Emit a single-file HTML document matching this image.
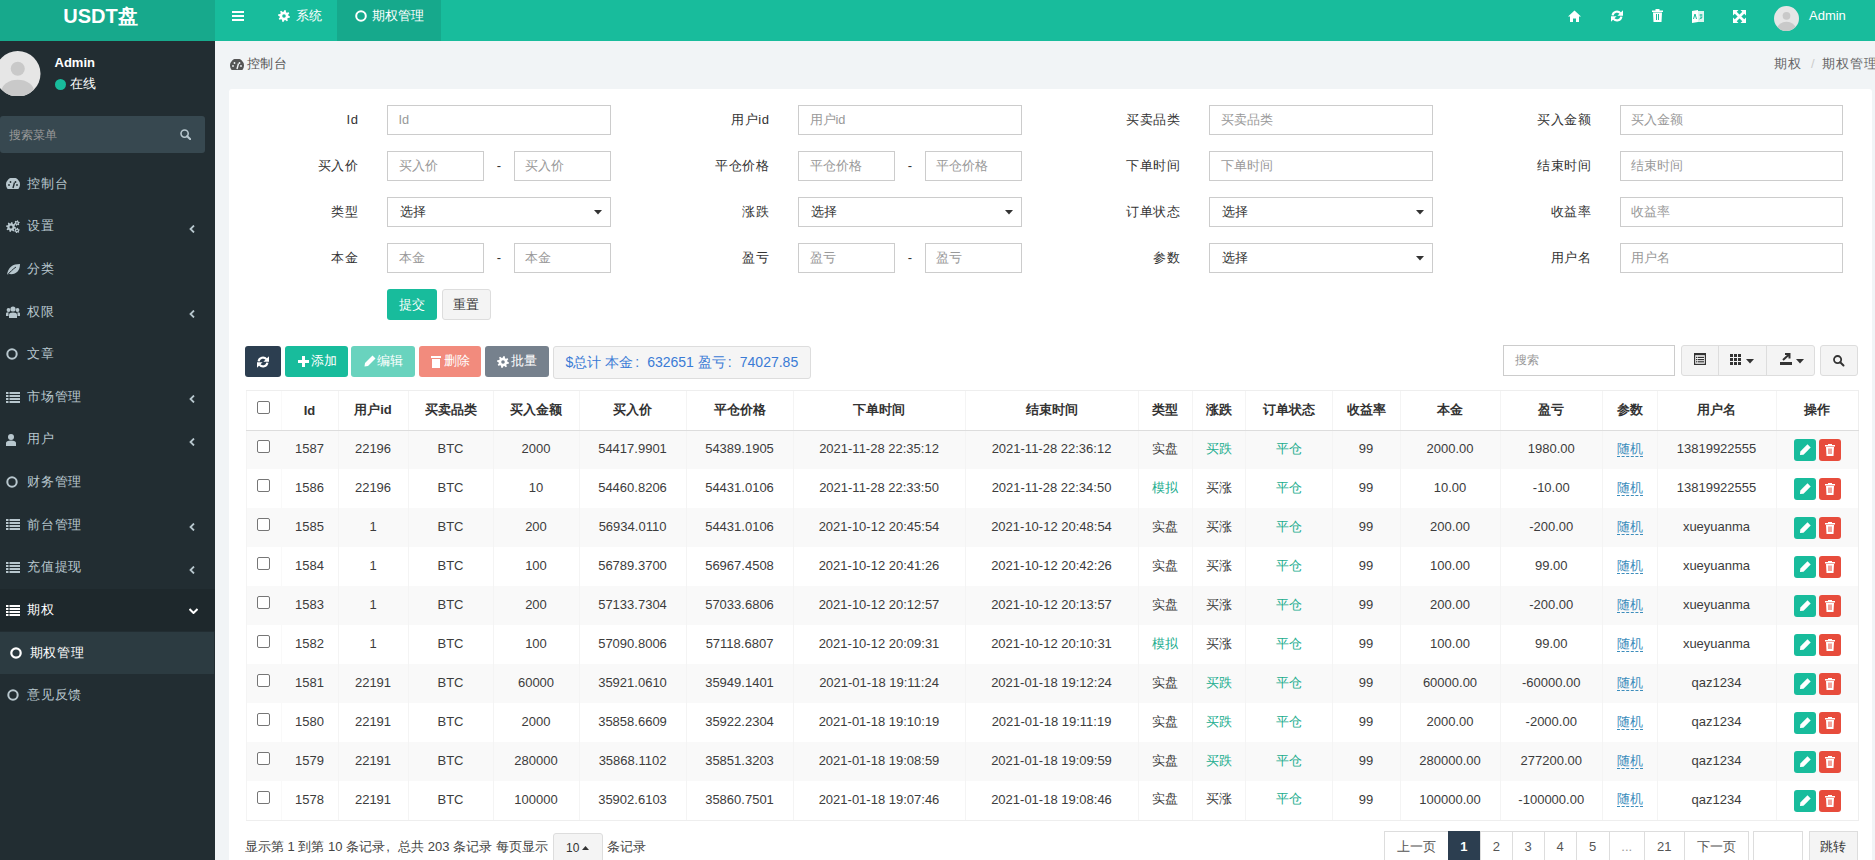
<!DOCTYPE html><html><head><meta charset="utf-8"><title>期权管理</title><style>
*{box-sizing:border-box;margin:0;padding:0}
html,body{width:1875px;height:860px;overflow:hidden}
body{font-family:"Liberation Sans",sans-serif;background:#f1f4f6;position:relative;color:#333;font-size:13px}
.abs{position:absolute}
svg{display:block}
.hdr{position:absolute;left:0;top:0;width:1875px;height:40.5px;background:#18bc9c}
.logo{position:absolute;left:0;top:0;width:215px;height:40.5px;background:#17a98c;color:#fff;font-weight:bold;font-size:20px;line-height:40px;text-align:center}
.navtxt{position:absolute;color:#fff;font-size:13px;line-height:16px;white-space:nowrap}
.side{position:absolute;left:0;top:40.5px;width:215px;height:820px;background:#222d32}
.mi{position:absolute;left:0;width:215px;height:42.6px;color:#b8c7ce;font-size:13px;letter-spacing:0.8px}
.mi .t{position:absolute;left:27px;top:0;line-height:42.6px;white-space:nowrap}
.mi .ic{position:absolute;left:6px;top:15px}
.mi .ch{position:absolute;left:189px;top:17px}
.panel{position:absolute;left:229px;top:89px;width:1643px;height:800px;background:#fff;border-radius:3px}
.lbl{position:absolute;width:121.6px;text-align:right;font-size:13px;letter-spacing:0.6px;color:#333;line-height:30px;white-space:nowrap}
.inp{position:absolute;height:30px;border:1px solid #ccc;background:#fff;font-size:12.8px;color:#999;line-height:28px;padding-left:10.5px;white-space:nowrap}
.sel{color:#333;font-size:13px;padding-left:12px}
.dash{position:absolute;width:10px;text-align:center;line-height:30px;color:#333;font-size:13px}
.btn{position:absolute;height:31px;border-radius:3px;color:#fff;font-size:12px;font-weight:500;line-height:31px;text-align:center;white-space:nowrap}
table{border-collapse:collapse;table-layout:fixed;position:absolute}
td,th{text-align:center;white-space:nowrap;overflow:hidden;border-left:1px solid #f4f4f4;font-size:13px;color:#333}
td{color:#3c3c3c}
th{font-weight:bold;height:40px;border-bottom:1px solid #ddd;border-top:1px solid #eee}
th:last-child,td:last-child{border-right:1px solid #eee}
tr:last-child td{border-bottom:1px solid #eee}
td{height:39px;padding-bottom:2px}
tr.odd td{background:#f9f9f9}
td:nth-child(2),th:nth-child(2){border-left-color:#f9f9f9}
.g{color:#22ad8e}
.rand{color:#3c8dbc;border-bottom:1px dashed #3c8dbc}
.cb{display:inline-block;width:13px;height:13px;border:1px solid #767676;border-radius:2px;background:#fff;vertical-align:middle;position:relative;top:-3px}
th .cb{top:-4px}
.pg{position:absolute;top:831px;height:32px;border:1px solid #ddd;background:#fff;color:#555;font-size:13px;line-height:30px;text-align:center}
</style></head><body>
<div class="hdr"></div>
<div class="logo"><span style="position:relative;left:-7px;top:-4px">USDT盘</span></div>
<svg class="abs" style="left:232px;top:10.5px;" width="13" height="10" viewBox="0 0 13 10"><rect x="0" y="0" width="12" height="2" fill="#fff"/><rect x="0" y="4" width="12" height="2" fill="#fff"/><rect x="0" y="8" width="12" height="2" fill="#fff"/></svg>
<svg class="abs" style="left:278px;top:9.5px;" width="12" height="12" viewBox="0 0 12 12"><path d="M6.59,0.03 L7.74,0.26 L8.03,2.21 L8.73,2.68 L10.64,2.19 L11.29,3.17 L10.11,4.75 L10.28,5.58 L11.97,6.59 L11.74,7.74 L9.79,8.03 L9.32,8.73 L9.81,10.64 L8.83,11.29 L7.25,10.11 L6.42,10.28 L5.41,11.97 L4.26,11.74 L3.97,9.79 L3.27,9.32 L1.36,9.81 L0.71,8.83 L1.89,7.25 L1.72,6.42 L0.03,5.41 L0.26,4.26 L2.21,3.97 L2.68,3.27 L2.19,1.36 L3.17,0.71 L4.75,1.89 L5.58,1.72Z" fill="#fff"/><circle cx="6" cy="6" r="1.8" fill="#18bc9c"/></svg>
<div class="navtxt" style="left:295.5px;top:7.5px">系统</div>
<div class="abs" style="left:337px;top:0;width:104px;height:40.5px;background:#16a98c"></div>
<svg class="abs" style="left:355px;top:9.5px;" width="12" height="12" viewBox="0 0 12 12"><circle cx="6" cy="6" r="4.8" fill="none" stroke="#fff" stroke-width="2"/></svg>
<div class="navtxt" style="left:372px;top:7.5px">期权管理</div>
<svg class="abs" style="left:1568px;top:10px;" width="13" height="12" viewBox="0 0 13 12"><path d="M6.5,0.5 L13,6.5 L11,6.5 L11,12 L8,12 L8,8.5 L5,8.5 L5,12 L2,12 L2,6.5 L0,6.5 Z" fill="#fff"/></svg>
<svg class="abs" style="left:1610.5px;top:10px;" width="12" height="12" viewBox="0 0 12 12"><path d="M1.6,5.4 A4.4,4.4 0 0 1 9.4,3.3" stroke="#fff" stroke-width="2.2" fill="none"/><path d="M12,0.2 L12,5.8 L6.4,5.8 Z" fill="#fff"/><path d="M10.4,6.6 A4.4,4.4 0 0 1 2.6,8.7" stroke="#fff" stroke-width="2.2" fill="none"/><path d="M0,11.8 L0,6.2 L5.6,6.2 Z" fill="#fff"/></svg>
<svg class="abs" style="left:1651.5px;top:9px;" width="11" height="13" viewBox="0 0 11 13"><path d="M3.5,1.5 L3.5,0 L7.5,0 L7.5,1.5 L11,1.5 L11,3 L0,3 L0,1.5 Z M1,3.5 L10,3.5 L9.5,13 L1.5,13 Z" fill="#fff"/><rect x="4" y="5" width="1" height="6" fill="#18bc9c"/><rect x="6" y="5" width="1" height="6" fill="#18bc9c"/></svg>
<svg class="abs" style="left:1692px;top:9.5px;" width="12" height="13" viewBox="0 0 12 13"><path d="M0,1 L6,0 L6,12 L0,13 Z" fill="#fff"/><path d="M6,1 L12,1 L12,12 L6,12 Z" fill="#fff" opacity="0.85"/><path d="M1.5,9 L3,4 L4.5,9" stroke="#18bc9c" stroke-width="1" fill="none"/><path d="M7.5,5 L10.5,5 M9,4 L9,9 M7.5,9 L10.5,7" stroke="#18bc9c" stroke-width="0.9" fill="none"/></svg>
<svg class="abs" style="left:1732.5px;top:9.5px;" width="13" height="13" viewBox="0 0 13 13"><path d="M2.5,2.5 L10.5,10.5 M10.5,2.5 L2.5,10.5" stroke="#fff" stroke-width="2.6"/><path d="M0,0 L5.5,0 L0,5.5 Z M13,0 L13,5.5 L7.5,0 Z M0,13 L0,7.5 L5.5,13 Z M13,13 L7.5,13 L13,7.5 Z" fill="#fff"/></svg>
<svg class="abs" style="left:1774px;top:6px;" width="25" height="25" viewBox="0 0 25 25"><defs><clipPath id="c1774"><circle cx="12.5" cy="12.5" r="12.5"/></clipPath></defs><circle cx="12.5" cy="12.5" r="12.5" fill="#e6e6e6"/><g clip-path="url(#c1774)"><circle cx="12.5" cy="9.75" r="3.875" fill="#c9c9c9"/><ellipse cx="12.5" cy="22.25" rx="9.0" ry="6.5" fill="#c9c9c9"/></g></svg>
<div class="navtxt" style="left:1809px;top:8px">Admin</div>
<div class="side"></div>
<svg class="abs" style="left:-5px;top:50.5px;" width="45.5" height="45.5" viewBox="0 0 45.5 45.5"><defs><clipPath id="c-5"><circle cx="22.75" cy="22.75" r="22.75"/></clipPath></defs><circle cx="22.75" cy="22.75" r="22.75" fill="#e6e6e6"/><g clip-path="url(#c-5)"><circle cx="22.75" cy="17.745" r="7.0525" fill="#c9c9c9"/><ellipse cx="22.75" cy="40.495" rx="16.38" ry="11.83" fill="#c9c9c9"/></g></svg>
<div class="abs" style="left:54.5px;top:54.5px;color:#fff;font-weight:bold;font-size:13px;line-height:16px">Admin</div>
<div class="abs" style="left:55px;top:79px;width:11px;height:11px;border-radius:50%;background:#18bc9c"></div>
<div class="abs" style="left:70px;top:75.5px;color:#fff;font-size:13px;line-height:16px">在线</div>
<div class="abs" style="left:0;top:116px;width:205px;height:37px;background:#374850;border-radius:3px"></div>
<div class="abs" style="left:9px;top:126.5px;color:#999;font-size:12px;line-height:16px">搜索菜单</div>
<svg class="abs" style="left:180px;top:129px;" width="11" height="11" viewBox="0 0 11 11"><circle cx="4.6" cy="4.6" r="3.6" fill="none" stroke="#b8c7ce" stroke-width="1.6"/><path d="M7.2,7.2 L10.5,10.5" stroke="#b8c7ce" stroke-width="2" stroke-linecap="round"/></svg>
<div class="mi" style="top:162.70px;color:#b8c7ce">
<svg class="ic" style="top:15.8px;" width="14" height="11" viewBox="0 0 14 11"><path d="M1.6,11 A7,7 0 1 1 12.4,11 Z" fill="#b8c7ce"/><path d="M7,10 L8.5,4.5" stroke="#222d32" stroke-width="1.4"/><circle cx="3" cy="7" r="0.9" fill="#222d32"/><circle cx="4.5" cy="4" r="0.9" fill="#222d32"/><circle cx="9.5" cy="4" r="0.9" fill="#222d32"/><circle cx="11" cy="7" r="0.9" fill="#222d32"/></svg>
<span class="t">控制台</span>
</div>
<div class="mi" style="top:205.32px;color:#b8c7ce">
<svg class="ic" style="top:14.8px;" width="14" height="13" viewBox="0 0 14 13"><path d="M5.49,2.02 L6.45,2.22 L6.70,3.83 L7.28,4.22 L8.87,3.83 L9.41,4.64 L8.44,5.95 L8.58,6.65 L9.98,7.49 L9.78,8.45 L8.17,8.70 L7.78,9.28 L8.17,10.87 L7.36,11.41 L6.05,10.44 L5.35,10.58 L4.51,11.98 L3.55,11.78 L3.30,10.17 L2.72,9.78 L1.13,10.17 L0.59,9.36 L1.56,8.05 L1.42,7.35 L0.02,6.51 L0.22,5.55 L1.83,5.30 L2.22,4.72 L1.83,3.13 L2.64,2.59 L3.95,3.56 L4.65,3.42Z" fill="#b8c7ce"/><circle cx="5" cy="7" r="1.5" fill="#222d32"/><path d="M11.37,0.22 L12.07,0.41 L12.22,1.41 L12.59,1.78 L13.59,1.93 L13.78,2.63 L12.98,3.26 L12.85,3.77 L13.22,4.70 L12.70,5.22 L11.77,4.85 L11.26,4.98 L10.63,5.78 L9.93,5.59 L9.78,4.59 L9.41,4.22 L8.41,4.07 L8.22,3.37 L9.02,2.74 L9.15,2.23 L8.78,1.30 L9.30,0.78 L10.23,1.15 L10.74,1.02Z" fill="#b8c7ce"/><circle cx="11" cy="3" r="0.8" fill="#222d32"/><path d="M11.37,7.72 L12.07,7.91 L12.22,8.91 L12.59,9.28 L13.59,9.43 L13.78,10.13 L12.98,10.76 L12.85,11.27 L13.22,12.20 L12.70,12.72 L11.77,12.35 L11.26,12.48 L10.63,13.28 L9.93,13.09 L9.78,12.09 L9.41,11.72 L8.41,11.57 L8.22,10.87 L9.02,10.24 L9.15,9.73 L8.78,8.80 L9.30,8.28 L10.23,8.65 L10.74,8.52Z" fill="#b8c7ce"/><circle cx="11" cy="10.5" r="0.8" fill="#222d32"/></svg>
<span class="t">设置</span>
<svg class="ch" style="top:19.5px;" width="6" height="8" viewBox="0 0 6 8"><path d="M5,0.5 L1.5,4 L5,7.5" stroke="#b8c7ce" stroke-width="1.8" fill="none"/></svg>
</div>
<div class="mi" style="top:247.94px;color:#b8c7ce">
<svg class="ic" style="top:14.8px;" width="14" height="13" viewBox="0 0 14 13"><path d="M1,12 C2,4 7,1 14,1 C14,8 10,12 3,11 Z" fill="#b8c7ce"/><path d="M1,12.5 C4,9 7,6 10,4" stroke="#222d32" stroke-width="1" fill="none"/></svg>
<span class="t">分类</span>
</div>
<div class="mi" style="top:290.56px;color:#b8c7ce">
<svg class="ic" style="top:15.3px;" width="14" height="12" viewBox="0 0 14 12"><circle cx="7" cy="3" r="2.6" fill="#b8c7ce"/><circle cx="2.5" cy="4" r="1.9" fill="#b8c7ce"/><circle cx="11.5" cy="4" r="1.9" fill="#b8c7ce"/><path d="M3,12 L3,8.5 Q3,6.5 7,6.5 Q11,6.5 11,8.5 L11,12 Z" fill="#b8c7ce"/><path d="M0,10 L0,7.5 Q0,6.2 2.5,6.2 L2.5,10 Z M14,10 L14,7.5 Q14,6.2 11.5,6.2 L11.5,10 Z" fill="#b8c7ce"/></svg>
<span class="t">权限</span>
<svg class="ch" style="top:19.5px;" width="6" height="8" viewBox="0 0 6 8"><path d="M5,0.5 L1.5,4 L5,7.5" stroke="#b8c7ce" stroke-width="1.8" fill="none"/></svg>
</div>
<div class="mi" style="top:333.18px;color:#b8c7ce">
<svg class="ic" style="top:15.3px;" width="12" height="12" viewBox="0 0 12 12"><circle cx="6" cy="6" r="4.7" fill="none" stroke="#b8c7ce" stroke-width="2"/></svg>
<span class="t">文章</span>
</div>
<div class="mi" style="top:375.80px;color:#b8c7ce">
<svg class="ic" style="top:15.8px;" width="14" height="11" viewBox="0 0 14 11"><rect x="0" y="0" width="2.5" height="2" fill="#b8c7ce"/><rect x="3.5" y="0" width="10.5" height="2" fill="#b8c7ce"/><rect x="0" y="3" width="2.5" height="2" fill="#b8c7ce"/><rect x="3.5" y="3" width="10.5" height="2" fill="#b8c7ce"/><rect x="0" y="6" width="2.5" height="2" fill="#b8c7ce"/><rect x="3.5" y="6" width="10.5" height="2" fill="#b8c7ce"/><rect x="0" y="9" width="2.5" height="2" fill="#b8c7ce"/><rect x="3.5" y="9" width="10.5" height="2" fill="#b8c7ce"/></svg>
<span class="t">市场管理</span>
<svg class="ch" style="top:19.5px;" width="6" height="8" viewBox="0 0 6 8"><path d="M5,0.5 L1.5,4 L5,7.5" stroke="#b8c7ce" stroke-width="1.8" fill="none"/></svg>
</div>
<div class="mi" style="top:418.42px;color:#b8c7ce">
<svg class="ic" style="top:15.3px;" width="10" height="12" viewBox="0 0 10 12"><circle cx="5" cy="3" r="3" fill="#b8c7ce"/><path d="M0,12 L0,9 Q0,6.5 5,6.5 Q10,6.5 10,9 L10,12 Z" fill="#b8c7ce"/></svg>
<span class="t">用户</span>
<svg class="ch" style="top:19.5px;" width="6" height="8" viewBox="0 0 6 8"><path d="M5,0.5 L1.5,4 L5,7.5" stroke="#b8c7ce" stroke-width="1.8" fill="none"/></svg>
</div>
<div class="mi" style="top:461.04px;color:#b8c7ce">
<svg class="ic" style="top:15.3px;" width="12" height="12" viewBox="0 0 12 12"><circle cx="6" cy="6" r="4.7" fill="none" stroke="#b8c7ce" stroke-width="2"/></svg>
<span class="t">财务管理</span>
</div>
<div class="mi" style="top:503.66px;color:#b8c7ce">
<svg class="ic" style="top:15.8px;" width="14" height="11" viewBox="0 0 14 11"><rect x="0" y="0" width="2.5" height="2" fill="#b8c7ce"/><rect x="3.5" y="0" width="10.5" height="2" fill="#b8c7ce"/><rect x="0" y="3" width="2.5" height="2" fill="#b8c7ce"/><rect x="3.5" y="3" width="10.5" height="2" fill="#b8c7ce"/><rect x="0" y="6" width="2.5" height="2" fill="#b8c7ce"/><rect x="3.5" y="6" width="10.5" height="2" fill="#b8c7ce"/><rect x="0" y="9" width="2.5" height="2" fill="#b8c7ce"/><rect x="3.5" y="9" width="10.5" height="2" fill="#b8c7ce"/></svg>
<span class="t">前台管理</span>
<svg class="ch" style="top:19.5px;" width="6" height="8" viewBox="0 0 6 8"><path d="M5,0.5 L1.5,4 L5,7.5" stroke="#b8c7ce" stroke-width="1.8" fill="none"/></svg>
</div>
<div class="mi" style="top:546.28px;color:#b8c7ce">
<svg class="ic" style="top:15.8px;" width="14" height="11" viewBox="0 0 14 11"><rect x="0" y="0" width="2.5" height="2" fill="#b8c7ce"/><rect x="3.5" y="0" width="10.5" height="2" fill="#b8c7ce"/><rect x="0" y="3" width="2.5" height="2" fill="#b8c7ce"/><rect x="3.5" y="3" width="10.5" height="2" fill="#b8c7ce"/><rect x="0" y="6" width="2.5" height="2" fill="#b8c7ce"/><rect x="3.5" y="6" width="10.5" height="2" fill="#b8c7ce"/><rect x="0" y="9" width="2.5" height="2" fill="#b8c7ce"/><rect x="3.5" y="9" width="10.5" height="2" fill="#b8c7ce"/></svg>
<span class="t">充值提现</span>
<svg class="ch" style="top:19.5px;" width="6" height="8" viewBox="0 0 6 8"><path d="M5,0.5 L1.5,4 L5,7.5" stroke="#b8c7ce" stroke-width="1.8" fill="none"/></svg>
</div>
<div class="mi" style="top:588.90px;background:#1e282c;color:#fff">
<svg class="ic" style="top:15.8px;" width="14" height="11" viewBox="0 0 14 11"><rect x="0" y="0" width="2.5" height="2" fill="#fff"/><rect x="3.5" y="0" width="10.5" height="2" fill="#fff"/><rect x="0" y="3" width="2.5" height="2" fill="#fff"/><rect x="3.5" y="3" width="10.5" height="2" fill="#fff"/><rect x="0" y="6" width="2.5" height="2" fill="#fff"/><rect x="3.5" y="6" width="10.5" height="2" fill="#fff"/><rect x="0" y="9" width="2.5" height="2" fill="#fff"/><rect x="3.5" y="9" width="10.5" height="2" fill="#fff"/></svg>
<span class="t">期权</span>
<svg class="ch" style="top:19px;" width="9" height="6" viewBox="0 0 9 6"><path d="M0.5,1 L4.5,5 L8.5,1" stroke="#fff" stroke-width="2" fill="none"/></svg>
</div>
<div class="abs" style="left:0;top:631.52px;width:214px;height:42.62px;background:#2c3b41"></div>
<svg class="abs" style="left:10px;top:646.8199999999999px;" width="12" height="12" viewBox="0 0 12 12"><circle cx="6" cy="6" r="4.7" fill="none" stroke="#fff" stroke-width="2.2"/></svg>
<div class="abs" style="left:29.5px;top:631.52px;line-height:42.62px;color:#fff;font-size:13px;letter-spacing:0.8px">期权管理</div>
<svg class="abs" style="left:7px;top:689.4399999999998px;" width="12" height="12" viewBox="0 0 12 12"><circle cx="6" cy="6" r="4.7" fill="none" stroke="#b8c7ce" stroke-width="2"/></svg>
<div class="abs" style="left:27px;top:674.14px;line-height:42.62px;color:#b8c7ce;font-size:13px;letter-spacing:0.8px">意见反馈</div>
<svg class="abs" style="left:229.5px;top:58.5px;" width="14" height="11" viewBox="0 0 14 11"><path d="M1.6,11 A7,7 0 1 1 12.4,11 Z" fill="#555"/><path d="M7,10 L8.5,4.5" stroke="#f1f4f6" stroke-width="1.4"/><circle cx="3" cy="7" r="0.9" fill="#f1f4f6"/><circle cx="4.5" cy="4" r="0.9" fill="#f1f4f6"/><circle cx="9.5" cy="4" r="0.9" fill="#f1f4f6"/><circle cx="11" cy="7" r="0.9" fill="#f1f4f6"/></svg>
<div class="abs" style="left:246.5px;top:56px;font-size:13px;letter-spacing:0.6px;line-height:16px;color:#555">控制台</div>
<div class="abs" style="left:1774px;top:56px;font-size:13px;letter-spacing:1px;line-height:16px;color:#555;white-space:nowrap;color:#666">期权<span style="color:#ccc;padding:0 6px 0 9px">/</span>期权管理</div>
<div class="panel"></div>
<div class="lbl" style="left:237px;top:105px">Id</div>
<div class="inp" style="left:387px;top:105px;width:223.5px">Id</div>
<div class="lbl" style="left:648px;top:105px">用户id</div>
<div class="inp" style="left:798px;top:105px;width:223.5px">用户id</div>
<div class="lbl" style="left:1059px;top:105px">买卖品类</div>
<div class="inp" style="left:1209px;top:105px;width:223.5px">买卖品类</div>
<div class="lbl" style="left:1470px;top:105px">买入金额</div>
<div class="inp" style="left:1619.5px;top:105px;width:223.5px">买入金额</div>
<div class="lbl" style="left:237px;top:151px">买入价</div>
<div class="inp" style="left:387px;top:151px;width:97px">买入价</div>
<div class="dash" style="left:494px;top:151px">-</div>
<div class="inp" style="left:513.5px;top:151px;width:97px">买入价</div>
<div class="lbl" style="left:648px;top:151px">平仓价格</div>
<div class="inp" style="left:798px;top:151px;width:97px">平仓价格</div>
<div class="dash" style="left:905px;top:151px">-</div>
<div class="inp" style="left:924.5px;top:151px;width:97px">平仓价格</div>
<div class="lbl" style="left:1059px;top:151px">下单时间</div>
<div class="inp" style="left:1209px;top:151px;width:223.5px">下单时间</div>
<div class="lbl" style="left:1470px;top:151px">结束时间</div>
<div class="inp" style="left:1619.5px;top:151px;width:223.5px">结束时间</div>
<div class="lbl" style="left:237px;top:197px">类型</div>
<div class="inp sel" style="left:387px;top:197px;width:223.5px">选择</div>
<svg class="abs" style="left:594px;top:210px;" width="8" height="5" viewBox="0 0 8 5"><path d="M0,0 L8,0 L4,4.5 Z" fill="#333"/></svg>
<div class="lbl" style="left:648px;top:197px">涨跌</div>
<div class="inp sel" style="left:798px;top:197px;width:223.5px">选择</div>
<svg class="abs" style="left:1005px;top:210px;" width="8" height="5" viewBox="0 0 8 5"><path d="M0,0 L8,0 L4,4.5 Z" fill="#333"/></svg>
<div class="lbl" style="left:1059px;top:197px">订单状态</div>
<div class="inp sel" style="left:1209px;top:197px;width:223.5px">选择</div>
<svg class="abs" style="left:1416px;top:210px;" width="8" height="5" viewBox="0 0 8 5"><path d="M0,0 L8,0 L4,4.5 Z" fill="#333"/></svg>
<div class="lbl" style="left:1470px;top:197px">收益率</div>
<div class="inp" style="left:1619.5px;top:197px;width:223.5px">收益率</div>
<div class="lbl" style="left:237px;top:243px">本金</div>
<div class="inp" style="left:387px;top:243px;width:97px">本金</div>
<div class="dash" style="left:494px;top:243px">-</div>
<div class="inp" style="left:513.5px;top:243px;width:97px">本金</div>
<div class="lbl" style="left:648px;top:243px">盈亏</div>
<div class="inp" style="left:798px;top:243px;width:97px">盈亏</div>
<div class="dash" style="left:905px;top:243px">-</div>
<div class="inp" style="left:924.5px;top:243px;width:97px">盈亏</div>
<div class="lbl" style="left:1059px;top:243px">参数</div>
<div class="inp sel" style="left:1209px;top:243px;width:223.5px">选择</div>
<svg class="abs" style="left:1416px;top:256px;" width="8" height="5" viewBox="0 0 8 5"><path d="M0,0 L8,0 L4,4.5 Z" fill="#333"/></svg>
<div class="lbl" style="left:1470px;top:243px">用户名</div>
<div class="inp" style="left:1619.5px;top:243px;width:223.5px">用户名</div>
<div class="btn" style="left:387px;top:289px;width:50px;background:#18bc9c;font-size:13px">提交</div>
<div class="btn" style="left:441.5px;top:289px;width:49.5px;background:#f4f4f4;border:1px solid #ddd;color:#333;font-size:13px;line-height:29px">重置</div>
<div class="btn" style="left:245px;top:346px;width:35.5px;background:#2c3e50;color:#fff"></div>
<svg class="abs" style="left:257px;top:355.5px;" width="12" height="12" viewBox="0 0 12 12"><path d="M1.6,5.4 A4.4,4.4 0 0 1 9.4,3.3" stroke="#fff" stroke-width="2.2" fill="none"/><path d="M12,0.2 L12,5.8 L6.4,5.8 Z" fill="#fff"/><path d="M10.4,6.6 A4.4,4.4 0 0 1 2.6,8.7" stroke="#fff" stroke-width="2.2" fill="none"/><path d="M0,11.8 L0,6.2 L5.6,6.2 Z" fill="#fff"/></svg>
<div class="btn" style="left:285px;top:346px;width:62.5px;background:#18bc9c;color:#fff"></div>
<svg class="abs" style="left:298px;top:355.5px;" width="11" height="11" viewBox="0 0 11 11"><path d="M4,0 L7,0 L7,4 L11,4 L11,7 L7,7 L7,11 L4,11 L4,7 L0,7 L0,4 L4,4 Z" fill="#fff"/></svg>
<div class="abs" style="left:310.5px;top:353px;color:#fff;font-size:12.5px;font-weight:500;line-height:16px">添加</div>
<div class="btn" style="left:351px;top:346px;width:64px;background:#69d3be;color:#fff"></div>
<svg class="abs" style="left:364px;top:355px;" width="12" height="12" viewBox="0 0 12 12"><path d="M8.5,0.5 L11.5,3.5 L4,11 L0.5,11.5 L1,8 Z" fill="#fff"/></svg>
<div class="abs" style="left:377px;top:353px;color:#fff;font-size:12.5px;font-weight:500;line-height:16px">编辑</div>
<div class="btn" style="left:419px;top:346px;width:61.5px;background:#f28b7d;color:#fff"></div>
<svg class="abs" style="left:431px;top:355.5px;" width="11" height="12" viewBox="0 0 11 12"><rect x="0" y="0" width="10" height="2" fill="#fff"/><rect x="1" y="3" width="8" height="9" fill="#fff"/></svg>
<div class="abs" style="left:444px;top:353px;color:#fff;font-size:12.5px;font-weight:500;line-height:16px">删除</div>
<div class="btn" style="left:485px;top:346px;width:63.5px;background:#76818d;color:#fff"></div>
<svg class="abs" style="left:497px;top:355.5px;" width="12" height="12" viewBox="0 0 12 12"><path d="M6.59,0.03 L7.74,0.26 L8.03,2.21 L8.73,2.68 L10.64,2.19 L11.29,3.17 L10.11,4.75 L10.28,5.58 L11.97,6.59 L11.74,7.74 L9.79,8.03 L9.32,8.73 L9.81,10.64 L8.83,11.29 L7.25,10.11 L6.42,10.28 L5.41,11.97 L4.26,11.74 L3.97,9.79 L3.27,9.32 L1.36,9.81 L0.71,8.83 L1.89,7.25 L1.72,6.42 L0.03,5.41 L0.26,4.26 L2.21,3.97 L2.68,3.27 L2.19,1.36 L3.17,0.71 L4.75,1.89 L5.58,1.72Z" fill="#fff"/><circle cx="6" cy="6" r="1.8" fill="#76818d"/></svg>
<div class="abs" style="left:511px;top:353px;color:#fff;font-size:12.5px;font-weight:500;line-height:16px">批量</div>
<div class="abs" style="left:552.5px;top:345.5px;width:258.5px;height:33px;background:#f5f5f5;border:1px solid #ddd;border-radius:3px;color:#3a7bd5;font-size:14px;line-height:31px;padding-left:12px;white-space:nowrap">$总计 本金<span style="display:inline-block;width:14px;padding-left:2px">:</span>632651 盈亏<span style="display:inline-block;width:14px;padding-left:2px">:</span>74027.85</div>
<div class="inp" style="left:1503px;top:345px;width:172px;height:30.5px;font-size:12px;line-height:28px">搜索</div>
<div class="abs" style="left:1680.5px;top:345px;width:134.5px;height:31px;background:#f4f4f4;border:1px solid #ddd;border-radius:3px"></div>
<div class="abs" style="left:1717.5px;top:346px;width:1px;height:29px;background:#ddd"></div>
<div class="abs" style="left:1766px;top:346px;width:1px;height:29px;background:#ddd"></div>
<svg class="abs" style="left:1694px;top:353px;" width="12" height="12" viewBox="0 0 12 12"><rect x="0.6" y="0.6" width="10.8" height="10.8" fill="none" stroke="#333" stroke-width="1.2"/><rect x="0" y="0" width="12" height="2.2" fill="#333"/><rect x="2" y="3.8" width="1.4" height="1.2" fill="#333"/><rect x="4" y="3.8" width="6" height="1.2" fill="#333"/><rect x="2" y="6" width="1.4" height="1.2" fill="#333"/><rect x="4" y="6" width="6" height="1.2" fill="#333"/><rect x="2" y="8.2" width="1.4" height="1.2" fill="#333"/><rect x="4" y="8.2" width="6" height="1.2" fill="#333"/></svg>
<svg class="abs" style="left:1730px;top:354px;" width="11" height="11" viewBox="0 0 11 11"><rect x="0" y="0" width="3" height="3" fill="#333"/><rect x="0" y="4" width="3" height="3" fill="#333"/><rect x="0" y="8" width="3" height="3" fill="#333"/><rect x="4" y="0" width="3" height="3" fill="#333"/><rect x="4" y="4" width="3" height="3" fill="#333"/><rect x="4" y="8" width="3" height="3" fill="#333"/><rect x="8" y="0" width="3" height="3" fill="#333"/><rect x="8" y="4" width="3" height="3" fill="#333"/><rect x="8" y="8" width="3" height="3" fill="#333"/></svg>
<svg class="abs" style="left:1746px;top:359px;" width="8" height="5" viewBox="0 0 8 5"><path d="M0,0 L8,0 L4,4.5 Z" fill="#333"/></svg>
<svg class="abs" style="left:1779.5px;top:353px;" width="12" height="12" viewBox="0 0 12 12"><rect x="0" y="9" width="12" height="3" fill="#333"/><path d="M3,7 L9,1.5 M5,1 L9.5,1 L9.5,5.5" stroke="#333" stroke-width="2" fill="none"/></svg>
<svg class="abs" style="left:1796px;top:359px;" width="8" height="5" viewBox="0 0 8 5"><path d="M0,0 L8,0 L4,4.5 Z" fill="#333"/></svg>
<div class="abs" style="left:1820px;top:345px;width:37.5px;height:31px;background:#f4f4f4;border:1px solid #ddd;border-radius:3px"></div>
<svg class="abs" style="left:1833px;top:354.5px;" width="12" height="12" viewBox="0 0 12 12"><circle cx="4.6" cy="4.6" r="3.6" fill="none" stroke="#333" stroke-width="1.8"/><path d="M7.2,7.2 L10.5,10.5" stroke="#333" stroke-width="2" stroke-linecap="round"/></svg>
<table style="left:245.5px;top:389.5px;width:1612.0px">
<colgroup><col style="width:35px"><col style="width:57px"><col style="width:70px"><col style="width:85px"><col style="width:86px"><col style="width:107px"><col style="width:107px"><col style="width:172px"><col style="width:173px"><col style="width:54px"><col style="width:53px"><col style="width:87px"><col style="width:68px"><col style="width:100px"><col style="width:102.5px"><col style="width:54.5px"><col style="width:119px"><col style="width:82px"></colgroup>
<tr><th><span class="cb"></span></th><th>Id</th><th>用户id</th><th>买卖品类</th><th>买入金额</th><th>买入价</th><th>平仓价格</th><th>下单时间</th><th>结束时间</th><th>类型</th><th>涨跌</th><th>订单状态</th><th>收益率</th><th>本金</th><th>盈亏</th><th>参数</th><th>用户名</th><th>操作</th></tr>
<tr class="odd"><td><span class="cb"></span></td><td>1587</td><td>22196</td><td>BTC</td><td>2000</td><td>54417.9901</td><td>54389.1905</td><td>2021-11-28 22:35:12</td><td>2021-11-28 22:36:12</td><td>实盘</td><td><span class="g">买跌</span></td><td><span class="g">平仓</span></td><td>99</td><td>2000.00</td><td>1980.00</td><td><span class="rand">随机</span></td><td>13819922555</td><td><span style="display:inline-block;width:22px;height:22px;background:#18bc9c;border-radius:3px;vertical-align:middle;position:relative;top:1.5px"><svg style="position:absolute;left:6px;top:5px" width="11" height="11" viewBox="0 0 11 11"><path d="M7.5,0.3 L10.7,3.5 L3.5,10.7 L0,11 L0.3,7.5 Z" fill="#fff"/></svg></span><span style="display:inline-block;width:22px;height:22px;background:#e74c3c;border-radius:3px;vertical-align:middle;position:relative;top:1.5px;margin-left:3px"><svg style="position:absolute;left:6px;top:5px" width="10" height="12" viewBox="0 0 10 12"><path d="M3,1 L3,0 L7,0 L7,1 L10,1 L10,2.5 L0,2.5 L0,1 Z M1,3 L9,3 L8.5,12 L1.5,12 Z" fill="#fff"/><rect x="3.5" y="4.5" width="1" height="5.5" fill="#e74c3c"/><rect x="5.5" y="4.5" width="1" height="5.5" fill="#e74c3c"/></svg></span></td></tr>
<tr class=""><td><span class="cb"></span></td><td>1586</td><td>22196</td><td>BTC</td><td>10</td><td>54460.8206</td><td>54431.0106</td><td>2021-11-28 22:33:50</td><td>2021-11-28 22:34:50</td><td><span class="g">模拟</span></td><td>买涨</td><td><span class="g">平仓</span></td><td>99</td><td>10.00</td><td>-10.00</td><td><span class="rand">随机</span></td><td>13819922555</td><td><span style="display:inline-block;width:22px;height:22px;background:#18bc9c;border-radius:3px;vertical-align:middle;position:relative;top:1.5px"><svg style="position:absolute;left:6px;top:5px" width="11" height="11" viewBox="0 0 11 11"><path d="M7.5,0.3 L10.7,3.5 L3.5,10.7 L0,11 L0.3,7.5 Z" fill="#fff"/></svg></span><span style="display:inline-block;width:22px;height:22px;background:#e74c3c;border-radius:3px;vertical-align:middle;position:relative;top:1.5px;margin-left:3px"><svg style="position:absolute;left:6px;top:5px" width="10" height="12" viewBox="0 0 10 12"><path d="M3,1 L3,0 L7,0 L7,1 L10,1 L10,2.5 L0,2.5 L0,1 Z M1,3 L9,3 L8.5,12 L1.5,12 Z" fill="#fff"/><rect x="3.5" y="4.5" width="1" height="5.5" fill="#e74c3c"/><rect x="5.5" y="4.5" width="1" height="5.5" fill="#e74c3c"/></svg></span></td></tr>
<tr class="odd"><td><span class="cb"></span></td><td>1585</td><td>1</td><td>BTC</td><td>200</td><td>56934.0110</td><td>54431.0106</td><td>2021-10-12 20:45:54</td><td>2021-10-12 20:48:54</td><td>实盘</td><td>买涨</td><td><span class="g">平仓</span></td><td>99</td><td>200.00</td><td>-200.00</td><td><span class="rand">随机</span></td><td>xueyuanma</td><td><span style="display:inline-block;width:22px;height:22px;background:#18bc9c;border-radius:3px;vertical-align:middle;position:relative;top:1.5px"><svg style="position:absolute;left:6px;top:5px" width="11" height="11" viewBox="0 0 11 11"><path d="M7.5,0.3 L10.7,3.5 L3.5,10.7 L0,11 L0.3,7.5 Z" fill="#fff"/></svg></span><span style="display:inline-block;width:22px;height:22px;background:#e74c3c;border-radius:3px;vertical-align:middle;position:relative;top:1.5px;margin-left:3px"><svg style="position:absolute;left:6px;top:5px" width="10" height="12" viewBox="0 0 10 12"><path d="M3,1 L3,0 L7,0 L7,1 L10,1 L10,2.5 L0,2.5 L0,1 Z M1,3 L9,3 L8.5,12 L1.5,12 Z" fill="#fff"/><rect x="3.5" y="4.5" width="1" height="5.5" fill="#e74c3c"/><rect x="5.5" y="4.5" width="1" height="5.5" fill="#e74c3c"/></svg></span></td></tr>
<tr class=""><td><span class="cb"></span></td><td>1584</td><td>1</td><td>BTC</td><td>100</td><td>56789.3700</td><td>56967.4508</td><td>2021-10-12 20:41:26</td><td>2021-10-12 20:42:26</td><td>实盘</td><td>买涨</td><td><span class="g">平仓</span></td><td>99</td><td>100.00</td><td>99.00</td><td><span class="rand">随机</span></td><td>xueyuanma</td><td><span style="display:inline-block;width:22px;height:22px;background:#18bc9c;border-radius:3px;vertical-align:middle;position:relative;top:1.5px"><svg style="position:absolute;left:6px;top:5px" width="11" height="11" viewBox="0 0 11 11"><path d="M7.5,0.3 L10.7,3.5 L3.5,10.7 L0,11 L0.3,7.5 Z" fill="#fff"/></svg></span><span style="display:inline-block;width:22px;height:22px;background:#e74c3c;border-radius:3px;vertical-align:middle;position:relative;top:1.5px;margin-left:3px"><svg style="position:absolute;left:6px;top:5px" width="10" height="12" viewBox="0 0 10 12"><path d="M3,1 L3,0 L7,0 L7,1 L10,1 L10,2.5 L0,2.5 L0,1 Z M1,3 L9,3 L8.5,12 L1.5,12 Z" fill="#fff"/><rect x="3.5" y="4.5" width="1" height="5.5" fill="#e74c3c"/><rect x="5.5" y="4.5" width="1" height="5.5" fill="#e74c3c"/></svg></span></td></tr>
<tr class="odd"><td><span class="cb"></span></td><td>1583</td><td>1</td><td>BTC</td><td>200</td><td>57133.7304</td><td>57033.6806</td><td>2021-10-12 20:12:57</td><td>2021-10-12 20:13:57</td><td>实盘</td><td>买涨</td><td><span class="g">平仓</span></td><td>99</td><td>200.00</td><td>-200.00</td><td><span class="rand">随机</span></td><td>xueyuanma</td><td><span style="display:inline-block;width:22px;height:22px;background:#18bc9c;border-radius:3px;vertical-align:middle;position:relative;top:1.5px"><svg style="position:absolute;left:6px;top:5px" width="11" height="11" viewBox="0 0 11 11"><path d="M7.5,0.3 L10.7,3.5 L3.5,10.7 L0,11 L0.3,7.5 Z" fill="#fff"/></svg></span><span style="display:inline-block;width:22px;height:22px;background:#e74c3c;border-radius:3px;vertical-align:middle;position:relative;top:1.5px;margin-left:3px"><svg style="position:absolute;left:6px;top:5px" width="10" height="12" viewBox="0 0 10 12"><path d="M3,1 L3,0 L7,0 L7,1 L10,1 L10,2.5 L0,2.5 L0,1 Z M1,3 L9,3 L8.5,12 L1.5,12 Z" fill="#fff"/><rect x="3.5" y="4.5" width="1" height="5.5" fill="#e74c3c"/><rect x="5.5" y="4.5" width="1" height="5.5" fill="#e74c3c"/></svg></span></td></tr>
<tr class=""><td><span class="cb"></span></td><td>1582</td><td>1</td><td>BTC</td><td>100</td><td>57090.8006</td><td>57118.6807</td><td>2021-10-12 20:09:31</td><td>2021-10-12 20:10:31</td><td><span class="g">模拟</span></td><td>买涨</td><td><span class="g">平仓</span></td><td>99</td><td>100.00</td><td>99.00</td><td><span class="rand">随机</span></td><td>xueyuanma</td><td><span style="display:inline-block;width:22px;height:22px;background:#18bc9c;border-radius:3px;vertical-align:middle;position:relative;top:1.5px"><svg style="position:absolute;left:6px;top:5px" width="11" height="11" viewBox="0 0 11 11"><path d="M7.5,0.3 L10.7,3.5 L3.5,10.7 L0,11 L0.3,7.5 Z" fill="#fff"/></svg></span><span style="display:inline-block;width:22px;height:22px;background:#e74c3c;border-radius:3px;vertical-align:middle;position:relative;top:1.5px;margin-left:3px"><svg style="position:absolute;left:6px;top:5px" width="10" height="12" viewBox="0 0 10 12"><path d="M3,1 L3,0 L7,0 L7,1 L10,1 L10,2.5 L0,2.5 L0,1 Z M1,3 L9,3 L8.5,12 L1.5,12 Z" fill="#fff"/><rect x="3.5" y="4.5" width="1" height="5.5" fill="#e74c3c"/><rect x="5.5" y="4.5" width="1" height="5.5" fill="#e74c3c"/></svg></span></td></tr>
<tr class="odd"><td><span class="cb"></span></td><td>1581</td><td>22191</td><td>BTC</td><td>60000</td><td>35921.0610</td><td>35949.1401</td><td>2021-01-18 19:11:24</td><td>2021-01-18 19:12:24</td><td>实盘</td><td><span class="g">买跌</span></td><td><span class="g">平仓</span></td><td>99</td><td>60000.00</td><td>-60000.00</td><td><span class="rand">随机</span></td><td>qaz1234</td><td><span style="display:inline-block;width:22px;height:22px;background:#18bc9c;border-radius:3px;vertical-align:middle;position:relative;top:1.5px"><svg style="position:absolute;left:6px;top:5px" width="11" height="11" viewBox="0 0 11 11"><path d="M7.5,0.3 L10.7,3.5 L3.5,10.7 L0,11 L0.3,7.5 Z" fill="#fff"/></svg></span><span style="display:inline-block;width:22px;height:22px;background:#e74c3c;border-radius:3px;vertical-align:middle;position:relative;top:1.5px;margin-left:3px"><svg style="position:absolute;left:6px;top:5px" width="10" height="12" viewBox="0 0 10 12"><path d="M3,1 L3,0 L7,0 L7,1 L10,1 L10,2.5 L0,2.5 L0,1 Z M1,3 L9,3 L8.5,12 L1.5,12 Z" fill="#fff"/><rect x="3.5" y="4.5" width="1" height="5.5" fill="#e74c3c"/><rect x="5.5" y="4.5" width="1" height="5.5" fill="#e74c3c"/></svg></span></td></tr>
<tr class=""><td><span class="cb"></span></td><td>1580</td><td>22191</td><td>BTC</td><td>2000</td><td>35858.6609</td><td>35922.2304</td><td>2021-01-18 19:10:19</td><td>2021-01-18 19:11:19</td><td>实盘</td><td><span class="g">买跌</span></td><td><span class="g">平仓</span></td><td>99</td><td>2000.00</td><td>-2000.00</td><td><span class="rand">随机</span></td><td>qaz1234</td><td><span style="display:inline-block;width:22px;height:22px;background:#18bc9c;border-radius:3px;vertical-align:middle;position:relative;top:1.5px"><svg style="position:absolute;left:6px;top:5px" width="11" height="11" viewBox="0 0 11 11"><path d="M7.5,0.3 L10.7,3.5 L3.5,10.7 L0,11 L0.3,7.5 Z" fill="#fff"/></svg></span><span style="display:inline-block;width:22px;height:22px;background:#e74c3c;border-radius:3px;vertical-align:middle;position:relative;top:1.5px;margin-left:3px"><svg style="position:absolute;left:6px;top:5px" width="10" height="12" viewBox="0 0 10 12"><path d="M3,1 L3,0 L7,0 L7,1 L10,1 L10,2.5 L0,2.5 L0,1 Z M1,3 L9,3 L8.5,12 L1.5,12 Z" fill="#fff"/><rect x="3.5" y="4.5" width="1" height="5.5" fill="#e74c3c"/><rect x="5.5" y="4.5" width="1" height="5.5" fill="#e74c3c"/></svg></span></td></tr>
<tr class="odd"><td><span class="cb"></span></td><td>1579</td><td>22191</td><td>BTC</td><td>280000</td><td>35868.1102</td><td>35851.3203</td><td>2021-01-18 19:08:59</td><td>2021-01-18 19:09:59</td><td>实盘</td><td><span class="g">买跌</span></td><td><span class="g">平仓</span></td><td>99</td><td>280000.00</td><td>277200.00</td><td><span class="rand">随机</span></td><td>qaz1234</td><td><span style="display:inline-block;width:22px;height:22px;background:#18bc9c;border-radius:3px;vertical-align:middle;position:relative;top:1.5px"><svg style="position:absolute;left:6px;top:5px" width="11" height="11" viewBox="0 0 11 11"><path d="M7.5,0.3 L10.7,3.5 L3.5,10.7 L0,11 L0.3,7.5 Z" fill="#fff"/></svg></span><span style="display:inline-block;width:22px;height:22px;background:#e74c3c;border-radius:3px;vertical-align:middle;position:relative;top:1.5px;margin-left:3px"><svg style="position:absolute;left:6px;top:5px" width="10" height="12" viewBox="0 0 10 12"><path d="M3,1 L3,0 L7,0 L7,1 L10,1 L10,2.5 L0,2.5 L0,1 Z M1,3 L9,3 L8.5,12 L1.5,12 Z" fill="#fff"/><rect x="3.5" y="4.5" width="1" height="5.5" fill="#e74c3c"/><rect x="5.5" y="4.5" width="1" height="5.5" fill="#e74c3c"/></svg></span></td></tr>
<tr class=""><td><span class="cb"></span></td><td>1578</td><td>22191</td><td>BTC</td><td>100000</td><td>35902.6103</td><td>35860.7501</td><td>2021-01-18 19:07:46</td><td>2021-01-18 19:08:46</td><td>实盘</td><td>买涨</td><td><span class="g">平仓</span></td><td>99</td><td>100000.00</td><td>-100000.00</td><td><span class="rand">随机</span></td><td>qaz1234</td><td><span style="display:inline-block;width:22px;height:22px;background:#18bc9c;border-radius:3px;vertical-align:middle;position:relative;top:1.5px"><svg style="position:absolute;left:6px;top:5px" width="11" height="11" viewBox="0 0 11 11"><path d="M7.5,0.3 L10.7,3.5 L3.5,10.7 L0,11 L0.3,7.5 Z" fill="#fff"/></svg></span><span style="display:inline-block;width:22px;height:22px;background:#e74c3c;border-radius:3px;vertical-align:middle;position:relative;top:1.5px;margin-left:3px"><svg style="position:absolute;left:6px;top:5px" width="10" height="12" viewBox="0 0 10 12"><path d="M3,1 L3,0 L7,0 L7,1 L10,1 L10,2.5 L0,2.5 L0,1 Z M1,3 L9,3 L8.5,12 L1.5,12 Z" fill="#fff"/><rect x="3.5" y="4.5" width="1" height="5.5" fill="#e74c3c"/><rect x="5.5" y="4.5" width="1" height="5.5" fill="#e74c3c"/></svg></span></td></tr>
</table>
<div class="abs" style="left:245px;top:839px;font-size:13px;line-height:16px;color:#444;white-space:nowrap">显示第 1 到第 10 条记录<span style="display:inline-block;width:13px;padding-left:1px">,</span>总共 203 条记录 每页显示</div>
<div class="abs" style="left:553px;top:833px;width:49.5px;height:30px;background:#f4f4f4;border:1px solid #ddd;border-radius:3px;font-size:12px;line-height:28px;padding-left:12px;color:#333">10</div>
<svg class="abs" style="left:582px;top:846px;" width="7" height="4" viewBox="0 0 7 4"><path d="M0,4 L7,4 L3.5,0 Z" fill="#333"/></svg>
<div class="abs" style="left:607px;top:839px;font-size:13px;line-height:16px;color:#444">条记录</div>
<div class="pg" style="left:1383.5px;width:65.0px;color:#555">上一页</div>
<div class="pg" style="left:1447.5px;width:32.5px;background:#2c3e50;border-color:#2c3e50;color:#fff;font-weight:bold">1</div>
<div class="pg" style="left:1480px;width:32.5px;color:#555">2</div>
<div class="pg" style="left:1511.5px;width:33.0px;color:#555">3</div>
<div class="pg" style="left:1543.5px;width:33.0px;color:#555">4</div>
<div class="pg" style="left:1575.5px;width:34.0px;color:#555">5</div>
<div class="pg" style="left:1608.5px;width:36.5px;color:#999">...</div>
<div class="pg" style="left:1644px;width:40.5px;color:#555">21</div>
<div class="pg" style="left:1683.5px;width:65.0px;color:#555">下一页</div>
<div class="pg" style="left:1753px;width:50px"></div>
<div class="pg" style="left:1808.5px;width:49px;background:#f4f4f4;color:#333">跳转</div>
</body></html>
